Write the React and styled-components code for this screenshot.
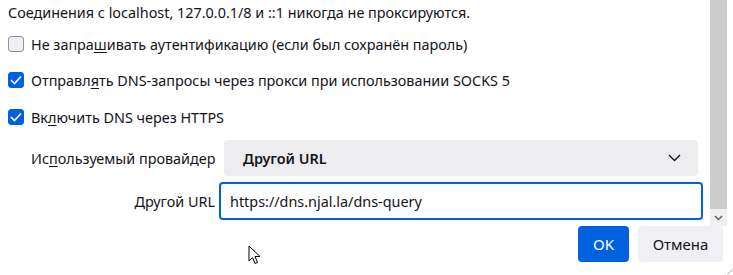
import React from "react";
import styled, { createGlobalStyle } from "styled-components";

const GlobalStyle = createGlobalStyle`
  html, body {
    margin: 0;
    padding: 0;
    background: #fff;
  }
  body {
    font-family: "Noto Sans", "Open Sans", sans-serif;
    font-size: 14.4px;
    color: #15141a;
  }
`;

const Dialog = styled.div`
  position: relative;
  width: 733px;
  height: 275px;
  overflow: hidden;
  background: #fff;
  display: grid;
  grid-template-rows: 226px 36px 1fr;
`;

const ScrollArea = styled.div`
  display: flex;
  padding-right: 6px;
  min-height: 0;
`;

const Content = styled.div`
  flex: 1;
  display: flex;
  flex-direction: column;
  padding: 3px 0 0 8px;
  overflow: hidden;
`;

const Note = styled.div`
  height: 20px;
  line-height: 20px;
  white-space: nowrap;
`;

const CheckRow = styled.label`
  display: flex;
  align-items: center;
  gap: 7px;
  height: 36px;
  margin-top: ${(p) => p.$top || 0}px;
  white-space: nowrap;
`;

const Box = styled.span`
  width: 16px;
  height: 16px;
  box-sizing: border-box;
  border-radius: 3px;
  display: grid;
  place-items: center;
  flex-shrink: 0;
  background: ${(p) => (p.$checked ? "#0061e0" : "#f0f0f4")};
  border: 1px solid ${(p) => (p.$checked ? "#0061e0" : "#8f8f9d")};
`;

const Key = styled.span`
  text-decoration: underline;
  text-underline-offset: 2px;
`;

const FieldRow = styled.div`
  display: grid;
  grid-template-columns: 184px 1fr;
  align-items: center;
  padding-left: 23px;
  margin-top: ${(p) => p.$top || 0}px;
  height: ${(p) => p.$h}px;
`;

const FieldLabel = styled.span`
  text-align: ${(p) => (p.$right ? "right" : "left")};
  white-space: nowrap;
`;

const Select = styled.div`
  margin-left: 9px;
  width: 474px;
  height: 36px;
  box-sizing: border-box;
  border-radius: 4px;
  background: #ededf0;
  display: flex;
  align-items: center;
  justify-content: space-between;
  padding: 0 17px 0 19px;
  font-weight: 600;
`;

const Input = styled.div`
  margin-left: 4px;
  width: 484px;
  height: 38px;
  box-sizing: border-box;
  border: 2px solid #0061e0;
  border-radius: 4px;
  display: flex;
  align-items: center;
  padding-left: 9px;
`;

const Scrollbar = styled.div`
  width: 17px;
  display: grid;
  grid-template-rows: 1fr 17px;
  background: #f0f0f0;
`;

const Thumb = styled.div`
  background: #cdcdcd;
`;

const ArrowBtn = styled.div`
  display: grid;
  place-items: center;
  background: #f0f0f0;
`;

const ButtonBar = styled.div`
  display: flex;
  justify-content: flex-end;
  gap: 9px;
  padding-right: 10px;
`;

const Button = styled.button`
  height: 36px;
  border: none;
  border-radius: 4px;
  font-family: inherit;
  font-size: 15px;
  padding: 0;
  width: ${(p) => p.$w}px;
  background: ${(p) => (p.$primary ? "#0061e0" : "#f0f0f4")};
  color: ${(p) => (p.$primary ? "#fff" : "#15141a")};
`;

const Cursor = styled.svg`
  position: absolute;
  left: 248px;
  top: 245px;
`;

const Grip = styled.svg`
  position: absolute;
  right: 0;
  bottom: 0;
`;

const Check = () => (
  <svg width="12" height="10" viewBox="0 0 12 10">
    <path d="M1 5 L4.5 8.5 L11 1.5" fill="none" stroke="#fff" strokeWidth="1.6" />
  </svg>
);

export default function App() {
  return (
    <>
      <GlobalStyle />
      <Dialog>
        <ScrollArea>
          <Content>
            <Note>Соединения с localhost, 127.0.0.1/8 и ::1 никогда не проксируются.</Note>
            <CheckRow $top={3}>
              <Box />
              <span>
                Не запра<Key>ш</Key>ивать аутентификацию (если был сохранён пароль)
              </span>
            </CheckRow>
            <CheckRow>
              <Box $checked>
                <Check />
              </Box>
              <span>
                Отправл<Key>я</Key>ть DNS-запросы через прокси при использовании SOCKS 5
              </span>
            </CheckRow>
            <CheckRow $top={1}>
              <Box $checked>
                <Check />
              </Box>
              <span>
                Вк<Key>л</Key>ючить DNS через HTTPS
              </span>
            </CheckRow>
            <FieldRow $top={5} $h={36}>
              <FieldLabel>
                Ис<Key>п</Key>ользуемый провайдер
              </FieldLabel>
              <Select>
                <span>Другой URL</span>
                <svg width="13" height="8" viewBox="0 0 13 8">
                  <path d="M1 1 L6.5 6.5 L12 1" fill="none" stroke="#15141a" strokeWidth="1.4" />
                </svg>
              </Select>
            </FieldRow>
            <FieldRow $top={6} $h={38}>
              <FieldLabel $right>Другой URL</FieldLabel>
              <Input>https://dns.njal.la/dns-query</Input>
            </FieldRow>
          </Content>
          <Scrollbar>
            <Thumb />
            <ArrowBtn>
              <svg width="9" height="6" viewBox="0 0 9 6">
                <path d="M1 1 L4.5 4.5 L8 1" fill="none" stroke="#606060" strokeWidth="1.5" />
              </svg>
            </ArrowBtn>
          </Scrollbar>
        </ScrollArea>
        <ButtonBar>
          <Button $primary $w={51}>OK</Button>
          <Button $w={85}>Отмена</Button>
        </ButtonBar>
        <Cursor width="15" height="21" viewBox="0 0 15 21">
          <path
            d="M1 1 L1 16 L4.5 12.5 L7 18.5 L9.5 17.5 L7 11.5 L12 11.5 Z"
            fill="#fff"
            stroke="#000"
            strokeWidth="1"
            strokeLinejoin="round"
          />
        </Cursor>
        <Grip width="6" height="6" viewBox="0 0 6 6">
          <path d="M0.5 5.5 L5.5 0.5" stroke="#a0a0a0" strokeWidth="1" />
        </Grip>
      </Dialog>
    </>
  );
}
